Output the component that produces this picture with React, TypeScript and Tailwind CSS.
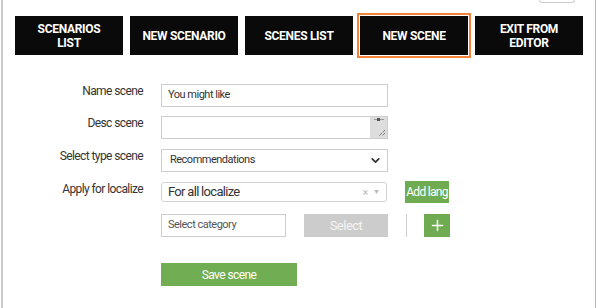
import { ChevronDown, Plus } from 'lucide-react';

const navItems = [
  { label: 'SCENARIOS\nLIST', active: false },
  { label: 'NEW SCENARIO', active: false },
  { label: 'SCENES LIST', active: false },
  { label: 'NEW SCENE', active: true },
  { label: 'EXIT FROM\nEDITOR', active: false },
];

const narrow = { fontFamily: 'Roboto, sans-serif' };

function Label({ children }: { children: string }) {
  return (
    <div className="w-[140px] shrink-0 text-right text-[12px] leading-[16px] tracking-[-0.6px] text-[#333] -mt-px" style={narrow}>
      {children}
    </div>
  );
}

export default function App() {
  return (
    <div className="flex h-[308px] w-[596px] bg-white">
      <div className="ml-px flex flex-1 flex-col border-l-2 border-r border-l-[#c9c9c9] border-r-[#b8b8b8]">
        {/* top bits */}
        <div className="flex h-[3px] justify-end pr-[20px]">
          <div className="h-[3px] w-[36px] rounded-b-lg border-x border-b border-[#cfcfcf]" />
        </div>

        {/* editor nav */}
        <div className="mt-[13px] flex gap-[7px] pl-[12px]">
          {navItems.map((item) => (
            <div
              key={item.label}
              className={`flex h-[39px] w-[108px] items-center justify-center whitespace-pre-line bg-[#0a0a0a] text-center text-[12px] font-bold leading-[14px] tracking-[-0.3px] text-white ${
                item.active ? 'outline-2 outline-offset-1 outline-[#f5823a]' : ''
              }`}
              style={{ fontFamily: 'Roboto, sans-serif' }}
            >
              {item.label}
            </div>
          ))}
        </div>

        {/* scene form */}
        <div className="mt-[29px] flex flex-col">
          <div className="flex items-start gap-[18px]">
            <Label>Name scene</Label>
            <div className="flex h-[23px] w-[227px] items-center border border-[#cdcdcd] px-[6px] text-[11px] tracking-[-0.5px] text-[#333]" style={narrow}>
              You might like
            </div>
          </div>

          <div className="mt-[9px] flex items-start gap-[18px]">
            <Label>Desc scene</Label>
            <div className="flex h-[23px] w-[227px] border border-[#cdcdcd]">
              <div className="flex-1" />
              <div className="relative w-[17px] bg-[#dddddd]">
                <div className="mx-auto mt-[2px] h-px w-[10px] bg-[#9a9a9a]" />
                <div className="mx-auto -mt-[2px] h-[3px] w-[3px] bg-[#555]" />
                <svg className="absolute bottom-[1px] right-[1px]" width="9" height="9" viewBox="0 0 9 9">
                  <path d="M8 2 L2 8 M8 5 L5 8" stroke="#444" strokeWidth="1" strokeDasharray="1 1" />
                </svg>
              </div>
            </div>
          </div>

          <div className="mt-[10px] flex items-start gap-[18px]">
            <Label>Select type scene</Label>
            <div className="flex h-[23px] w-[227px] items-center justify-between border border-[#cdcdcd] pl-[8px] pr-[5px] text-[11px] tracking-[-0.5px] text-[#333]" style={narrow}>
              <span>Recommendations</span>
              <ChevronDown size={13} strokeWidth={3.2} className="text-[#333]" />
            </div>
          </div>

          <div className="mt-[9px] flex items-start gap-[18px]">
            <div className="pt-[1px]">
              <Label>Apply for localize</Label>
            </div>
            <div className="mt-[1px] flex h-[20px] w-[226px] items-center justify-between rounded-[3px] border border-[#d2d2d2] pl-[6px] pr-[6px] text-[13px] tracking-[-0.7px] text-[#333]" style={narrow}>
              <span>For all localize</span>
              <span className="flex items-center gap-[5px] text-[10px] tracking-normal text-[#b5b5b5]">
                <span>×</span>
                <span className="text-[7px]">▼</span>
              </span>
            </div>
            <div className="flex h-[22px] w-[44px] items-center justify-center whitespace-nowrap bg-[#6fac51] text-[12px] tracking-[-0.7px] text-white" style={narrow}>
              Add lang
            </div>
          </div>

          <div className="mt-[11px] flex items-start pl-[158px]">
            <div className="flex h-[23px] w-[125px] items-center border border-[#cdcdcd] px-[6px] text-[11px] tracking-[-0.5px] text-[#555]" style={narrow}>
              Select category
            </div>
            <div className="ml-[18px] flex h-[23px] w-[84px] items-center justify-center bg-[#cccccc] text-[13px] tracking-[-0.5px] text-[#f4f4f4]" style={narrow}>
              Select
            </div>
            <div className="ml-[18px] h-[23px] w-px bg-[#cfcfcf]" />
            <div className="ml-[17px] flex h-[23px] w-[26px] items-center justify-center bg-[#6fac51] text-white">
              <Plus size={17} strokeWidth={2.2} />
            </div>
          </div>

          <div className="mt-[26px] pl-[158px]">
            <div className="flex h-[23px] w-[136px] items-center justify-center bg-[#70ad53] text-[12px] tracking-[-0.6px] text-white" style={narrow}>
              Save scene
            </div>
          </div>
        </div>
      </div>
    </div>
  );
}
